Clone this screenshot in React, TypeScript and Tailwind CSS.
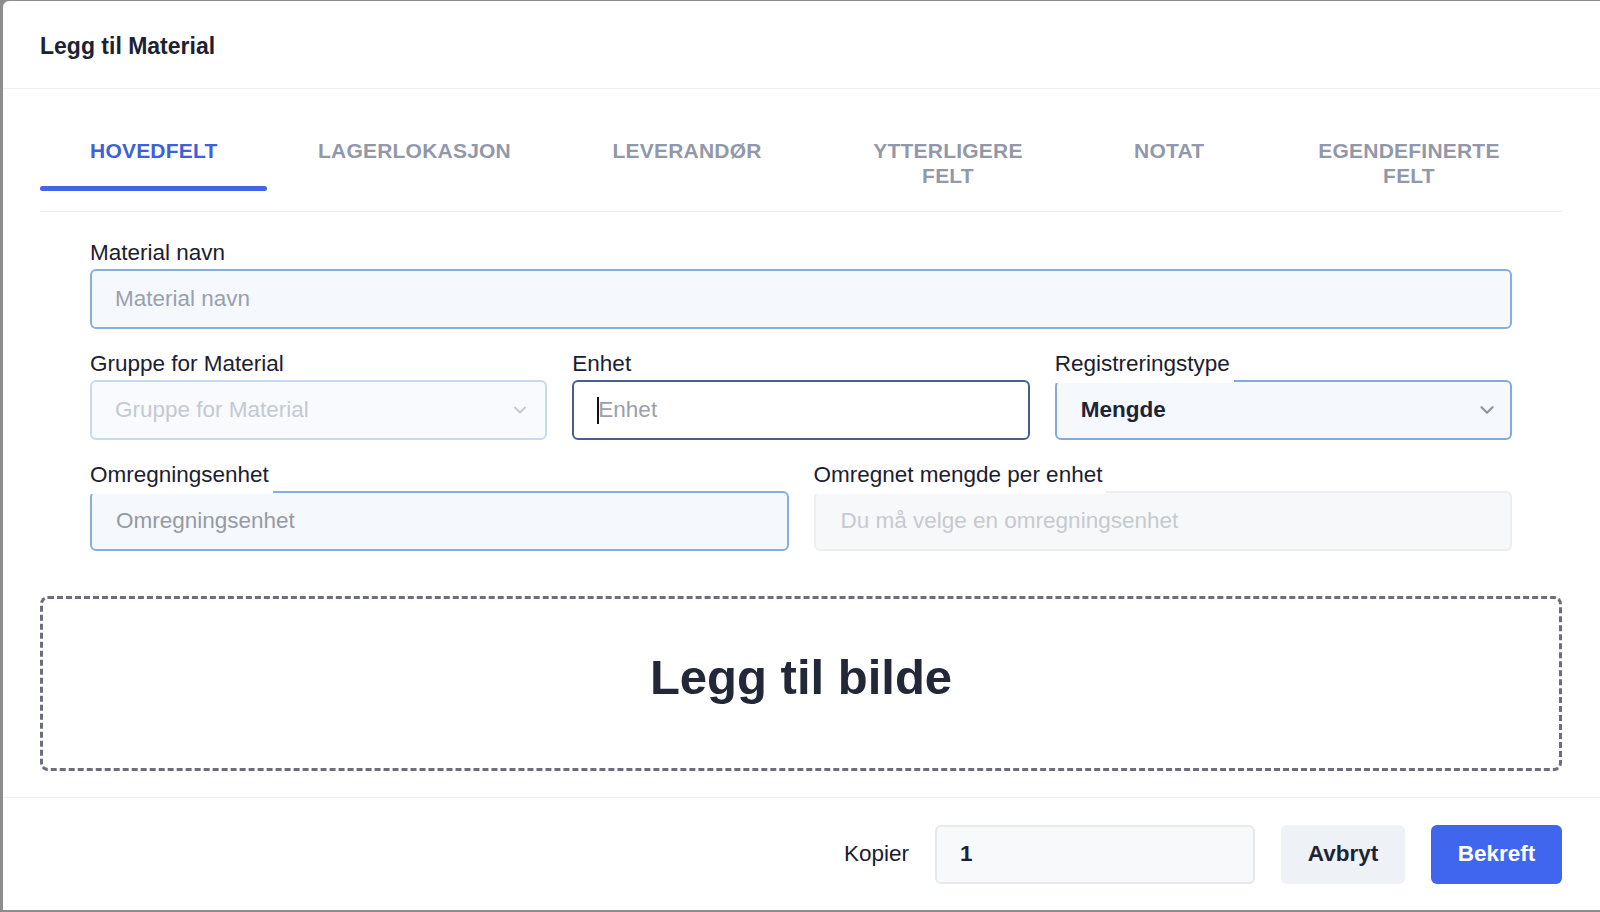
import React from 'react';

const tabs = [
  { label: 'HOVEDFELT', width: 'w-[227px]', active: true },
  { label: 'LAGERLOKASJON', width: 'w-[295px]' },
  { label: 'LEVERANDØR', width: 'w-[250px]' },
  { label: 'YTTERLIGERE FELT', width: 'w-[272px]' },
  { label: 'NOTAT', width: 'w-[170px]' },
  { label: 'EGENDEFINERTE FELT', width: 'w-[310px]' },
];

const Chevron: React.FC<{ className?: string }> = ({ className }) => (
  <svg viewBox="0 0 24 24" fill="none" stroke="currentColor" strokeWidth={2.4} strokeLinecap="round" strokeLinejoin="round" className={className}>
    <path d="M6 9l6 6 6-6" />
  </svg>
);

// label with white box that overlaps the input's top edge a bit (as in the screenshot)
const Label: React.FC<{ children: React.ReactNode; overlap?: boolean }> = ({ children, overlap }) => (
  <label
    className={`block w-fit text-[22.5px] leading-[27px] text-[#1b2030] ${
      overlap ? 'relative z-10 bg-white pr-[4px] -mb-[3px] pb-[6px]' : 'mb-[3px]'
    }`}
  >
    {children}
  </label>
);

export default function App() {
  return (
    <div className="h-screen w-full bg-[#8d8d8f] pl-[3px] pt-[1px] pb-[2px]" style={{ fontFamily: '"Liberation Sans", Arial, sans-serif' }}>
      <div className="h-full bg-white rounded-tl-[6px] flex flex-col">
        {/* Header */}
        <div className="h-[88px] flex items-center pt-[4px] px-[37px] border-b border-[#eef0f3]">
          <h1 className="text-[23px] font-bold text-[#1c2233]">Legg til Material</h1>
        </div>

        <div className="pl-[37px] pr-[38px]">
          {/* Tabs */}
          <div className="flex h-[123px] border-b border-[#eceef2]">
            {tabs.map((t) => (
              <div key={t.label} className={`relative ${t.width} shrink-0 px-[50px] pt-[49px] text-center`}>
                <span
                  className={`block text-[21px] leading-[25px] font-bold tracking-[0.01em] ${
                    t.active ? 'text-[#3f60d8]' : 'text-[#9298aa]'
                  }`}
                >
                  {t.label}
                </span>
                {t.active && <div className="absolute left-0 right-0 top-[97px] h-[5px] rounded-full bg-[#4166e0]" />}
              </div>
            ))}
          </div>

          {/* Form */}
          <div className="px-[50px] pt-[27px]">
            <Label>Material navn</Label>
            <input
              placeholder="Material navn"
              className="w-full h-[60px] rounded-[6px] border-2 border-[#86afdc] bg-[#f5f8fc] px-[23px] text-[22.5px] text-[#1b2030] placeholder:text-[#9aa0ad] outline-none"
            />

            <div className="grid grid-cols-3 gap-[25px] mt-[21px]">
              <div>
                <Label>Gruppe for Material</Label>
                <div className="h-[60px] rounded-[6px] border-2 border-[#c6dbee] bg-[#f8fafd] pl-[23px] pr-[15px] flex items-center justify-between">
                  <span className="text-[22.5px] text-[#c4c9d1]">Gruppe for Material</span>
                  <Chevron className="w-[20px] h-[20px] text-[#c4c9d1]" />
                </div>
              </div>
              <div>
                <Label>Enhet</Label>
                <div className="relative">
                  <input
                    placeholder="Enhet"
                    className="w-full h-[60px] rounded-[6px] border-2 border-[#45618a] bg-white px-[24px] text-[22.5px] text-[#1b2030] placeholder:text-[#9aa0ad] outline-none"
                  />
                  <span className="absolute left-[25px] top-[17px] h-[27px] w-[2px] bg-[#111]" />
                </div>
              </div>
              <div>
                <Label overlap>Registreringstype</Label>
                <div className="h-[60px] rounded-[6px] border-2 border-[#81abdb] bg-[#f5f8fc] pl-[24px] pr-[12px] flex items-center justify-between">
                  <span className="text-[22.5px] font-bold text-[#1e2433]">Mengde</span>
                  <Chevron className="w-[22px] h-[22px] text-[#8f94a4]" />
                </div>
              </div>
            </div>

            <div className="grid grid-cols-2 gap-[25px] mt-[21px]">
              <div>
                <Label overlap>Omregningsenhet</Label>
                <input
                  placeholder="Omregningsenhet"
                  className="w-full h-[60px] rounded-[6px] border-2 border-[#86afdc] bg-[#f5f8fc] px-[24px] text-[22.5px] text-[#1b2030] placeholder:text-[#959aa6] outline-none"
                />
              </div>
              <div>
                <Label overlap>Omregnet mengde per enhet</Label>
                <input
                  disabled
                  placeholder="Du må velge en omregningsenhet"
                  className="w-full h-[60px] rounded-[6px] border-2 border-[#eceef1] bg-[#f7f8fa] px-[25px] text-[22.5px] placeholder:text-[#c6cad0] outline-none"
                />
              </div>
            </div>
          </div>

          {/* Image drop area */}
          <div className="mt-[45px] h-[175px] rounded-[8px] border-[3px] border-dashed border-[#6c6f7b] flex items-center justify-center pb-[12px]">
            <span className="text-[49px] font-bold text-[#222838]">Legg til bilde</span>
          </div>
        </div>

        {/* Footer */}
        <div className="mt-[26px] flex-1 border-t border-[#eef0f3] flex items-center justify-end gap-[26px] pr-[38px]">
          <span className="text-[22.5px] text-[#1b2030]">Kopier</span>
          <input
            defaultValue="1"
            className="w-[320px] h-[59px] rounded-[6px] border-2 border-[#e6e9ee] bg-[#f7f9fb] px-[23px] text-[22.5px] font-bold text-[#1b2030] outline-none"
          />
          <button className="w-[124px] h-[59px] rounded-[6px] bg-[#eef1f6] text-[22.5px] font-bold text-[#1e2433]">Avbryt</button>
          <button className="w-[131px] h-[59px] rounded-[6px] bg-[#4066f0] text-[22.5px] font-bold text-white">Bekreft</button>
        </div>
      </div>
    </div>
  );
}
